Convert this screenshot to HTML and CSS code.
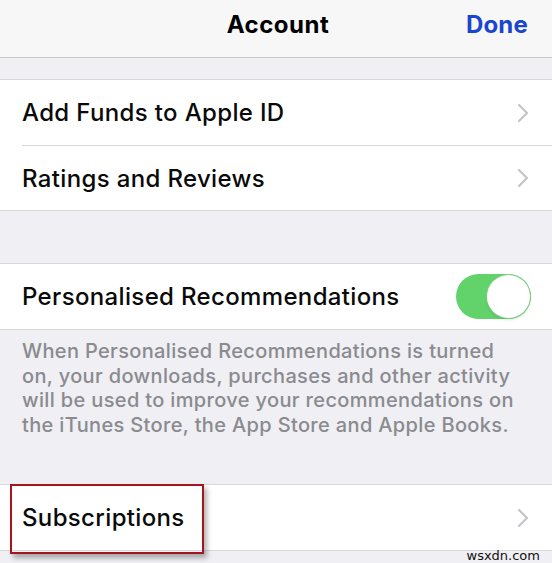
FILE: index.html
```html
<!DOCTYPE html>
<html lang="en">
<head>
<meta charset="utf-8">
<title>Account</title>
<link rel="stylesheet" href="styles.css">
</head>
<body>
<div class="screen">
  <header class="navbar">
    <span class="nav-side"></span>
    <h1 class="nav-title">Account</h1>
    <span class="nav-side nav-done">Done</span>
  </header>

  <div class="spacer spacer-top"></div>

  <section class="group">
    <div class="cell">
      <span class="cell-label">Add Funds to Apple ID</span>
      <svg class="chevron" viewBox="0 0 12 20" width="12" height="20"><path d="M2 2 L10 10 L2 18" fill="none" stroke="currentColor" stroke-width="2.2" stroke-linecap="round" stroke-linejoin="round"/></svg>
    </div>
    <div class="cell">
      <span class="cell-label">Ratings and Reviews</span>
      <svg class="chevron" viewBox="0 0 12 20" width="12" height="20"><path d="M2 2 L10 10 L2 18" fill="none" stroke="currentColor" stroke-width="2.2" stroke-linecap="round" stroke-linejoin="round"/></svg>
    </div>
  </section>

  <div class="spacer spacer-mid"></div>

  <section class="group">
    <div class="cell">
      <span class="cell-label">Personalised Recommendations</span>
      <span class="toggle"><span class="knob"></span></span>
    </div>
  </section>

  <p class="footnote">When Personalised Recommendations is turned on, your downloads, purchases and other activity will be used to improve your recommendations on the iTunes Store, the App Store and Apple Books.</p>

  <section class="group">
    <div class="cell">
      <span class="cell-label highlight">Subscriptions</span>
      <svg class="chevron" viewBox="0 0 12 20" width="12" height="20"><path d="M2 2 L10 10 L2 18" fill="none" stroke="currentColor" stroke-width="2.2" stroke-linecap="round" stroke-linejoin="round"/></svg>
    </div>
  </section>

  <div class="bottom">
    <span class="mark">wsxdn.com</span>
  </div>
</div>
</body>
</html>
```

FILE: styles.css
```css
* {
  box-sizing: border-box;
}

html, body {
  margin: 0;
  padding: 0;
  background: #efeff4;
}

.screen {
  width: 552px;
  height: 563px;
  overflow: hidden;
  display: flex;
  flex-direction: column;
  font-family: Inter, "Liberation Sans", Arial, sans-serif;
  color: #000;
}

/* navigation bar */
.navbar {
  height: 58px;
  flex: none;
  background: #f7f7f7;
  border-bottom: 1px solid #c8c7cc;
  display: flex;
  align-items: center;
  justify-content: space-between;
  padding: 0 24px 8px 24px;
}

.nav-title {
  margin: 0;
  font-size: 24px;
  font-weight: 700;
  letter-spacing: 0.5px;
  padding-left: 4px;
}

.nav-side {
  width: 70px;
  font-size: 24px;
  font-weight: 700;
  text-align: right;
  letter-spacing: 0.2px;
}

.nav-done {
  color: #1a45cf;
}

/* grouped table */
.spacer {
  flex: none;
}

.spacer-top {
  height: 21px;
}

.spacer-mid {
  height: 52px;
}

.group {
  flex: none;
  background: #fff;
  border-top: 1px solid #d9d9dd;
  border-bottom: 1px solid #d9d9dd;
}

.cell {
  height: 65px;
  display: flex;
  align-items: center;
  justify-content: space-between;
  padding: 0 22px 0 22px;
}

.cell + .cell {
  border-top: 1px solid #d9d9dd;
  margin-left: 22px;
  padding-left: 0;
}

.cell-label {
  font-size: 24px;
  font-weight: 500;
  letter-spacing: 0.35px;
  color: #0a0a0a;
}

.chevron {
  color: #c4c4c9;
  margin-right: 1px;
}

/* switch */
.toggle {
  width: 75px;
  height: 45px;
  border-radius: 23px;
  background: #62d26b;
  display: flex;
  align-items: center;
  justify-content: flex-end;
  padding: 1px;
  margin-right: -1px;
}

.knob {
  width: 43px;
  height: 43px;
  border-radius: 50%;
  background: #fff;
  box-shadow: 0 0 0 1px #7dcf83, 0 2px 3px rgba(0, 0, 0, 0.12);
}

/* footer note */
.footnote {
  flex: none;
  height: 154px;
  margin: 0;
  padding: 9px 0 0 22px;
  width: 520px;
  font-size: 20px;
  font-weight: 500;
  line-height: 24.6px;
  color: #8a8a8f;
  letter-spacing: 0.35px;
}

/* highlighted row label */
.highlight {
  position: relative;
}

.highlight::after {
  content: "";
  position: absolute;
  left: -12px;
  top: -19px;
  width: 190px;
  height: 66px;
  border: 2px solid #a3161f;
  box-shadow: 3px 4px 5px rgba(0, 0, 0, 0.3);
}

.bottom {
  flex: 1;
  position: relative;
}

.mark {
  position: absolute;
  right: 12px;
  top: -3px;
  font-family: "DejaVu Sans", sans-serif;
  font-size: 13px;
  color: #111;
}
```
